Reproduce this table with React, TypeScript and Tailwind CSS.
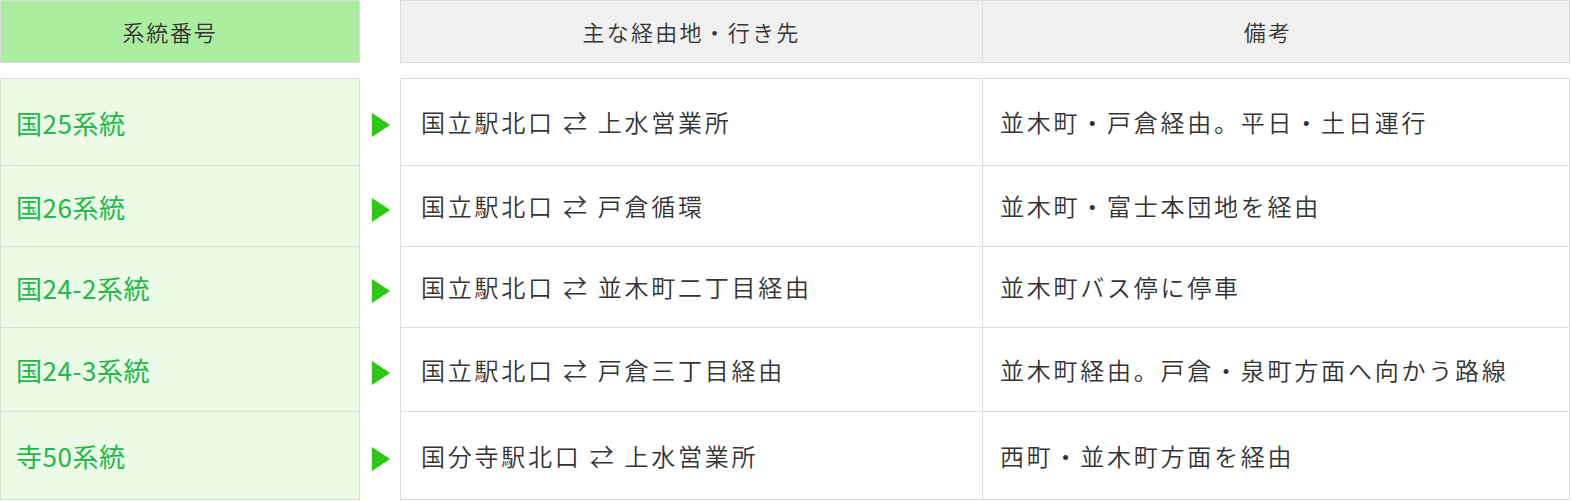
import React from "react";

type Route = {
  code: string;
  via: string;
  note: string;
  h: string;
};

const routes: Route[] = [
  { code: "国25系統", via: "国立駅北口 ⇄ 上水営業所", note: "並木町・戸倉経由。平日・土日運行", h: "h-[88px]" },
  { code: "国26系統", via: "国立駅北口 ⇄ 戸倉循環", note: "並木町・富士本団地を経由", h: "h-[81px]" },
  { code: "国24-2系統", via: "国立駅北口 ⇄ 並木町二丁目経由", note: "並木町バス停に停車", h: "h-[81px]" },
  { code: "国24-3系統", via: "国立駅北口 ⇄ 戸倉三丁目経由", note: "並木町経由。戸倉・泉町方面へ向かう路線", h: "h-[84px]" },
  { code: "寺50系統", via: "国分寺駅北口 ⇄ 上水営業所", note: "西町・並木町方面を経由", h: "h-[88px]" },
];

const base = { fontFamily: '"Noto Sans CJK JP", "Noto Sans", sans-serif' };
const light = {
  fontFamily: '"Noto Sans CJK JP DemiLight", "Noto Sans CJK JP Light", "Noto Sans CJK JP", "Noto Sans", sans-serif',
};

function Arrow() {
  return (
    <svg width="18" height="24" viewBox="0 0 18 24" className="translate-y-[3px]">
      <polygon points="0,0 18,12 0,24" fill="#2bc816" />
    </svg>
  );
}

export default function App() {
  return (
    <div className="w-[1570px] bg-white" style={base}>
      <div className="flex h-[63px]">
        <div
          className="flex w-[360px] items-center justify-center border border-[#dcdcdc] bg-[#abeea0] pr-[20px] text-[22px] font-light tracking-[0.08em] text-[#333]"
          style={light}
        >
          系統番号
        </div>
        <div className="w-[40px]" />
        <div
          className="flex flex-1 border border-[#dcdcdc] bg-[#f0f0f0] text-[22px] font-light tracking-[0.1em] text-[#333]"
          style={light}
        >
          <div className="flex w-[582px] items-center justify-center border-r border-[#dcdcdc]">
            主な経由地・行き先
          </div>
          <div className="flex flex-1 items-center justify-center pr-[16px]">備考</div>
        </div>
      </div>

      <div className="mt-[15px] flex flex-col">
        {routes.map((r, i) => (
          <div key={r.code} className={`flex ${r.h}`}>
            <div
              className={`flex w-[360px] items-center border-x border-b border-[#dcdcdc] bg-[#ebfbe6] pl-[15px] text-[26px] font-normal tracking-[0.02em] text-[#22b84a] ${
                i === 0 ? "border-t" : ""
              }`}
            >
              {r.code}
            </div>
            <div className="flex w-[40px] items-center pl-[12px]">
              <Arrow />
            </div>
            <div
              className={`flex flex-1 border-x border-b border-[#dcdcdc] text-[24px] font-light tracking-[0.115em] text-[#333] ${
                i === 0 ? "border-t" : ""
              }`}
              style={light}
            >
              <div className="flex w-[582px] items-center border-r border-[#dcdcdc] pl-[20px]">{r.via}</div>
              <div className="flex flex-1 items-center pl-[17px]">{r.note}</div>
            </div>
          </div>
        ))}
      </div>
    </div>
  );
}
